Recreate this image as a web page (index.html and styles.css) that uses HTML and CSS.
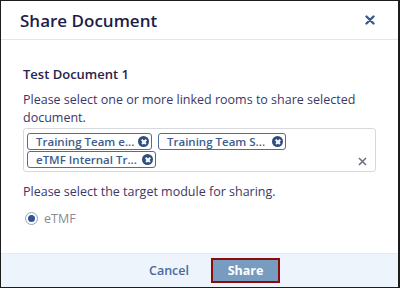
FILE: index.html
```html
<!DOCTYPE html>
<html lang="en">
<head>
    <meta charset="UTF-8">
    <title>Share Document</title>
    <link rel="stylesheet" href="styles.css">
</head>
<body>
    <div class="modal">
        <div class="modal-header">
            <h1>Share Document</h1>
            <button class="close-btn" aria-label="Close">
                <svg width="10" height="10" viewBox="0 0 10 10"><path d="M1.5 1.5 L8.5 8.5 M8.5 1.5 L1.5 8.5" stroke="#3c5a8a" stroke-width="2.4" stroke-linecap="round"/></svg>
            </button>
        </div>

        <div class="modal-body">
            <h2>Test Document 1</h2>
            <p class="hint">Please select one or more linked rooms to share selected document.</p>

            <div class="tag-box">
                <div class="tags">
                    <span class="tag">Training Team e... <i class="tag-x"></i></span>
                    <span class="tag">Training Team S... <i class="tag-x"></i></span>
                    <span class="tag">eTMF Internal Tr... <i class="tag-x"></i></span>
                </div>
                <span class="clear-all">
                    <svg width="9" height="9" viewBox="0 0 9 9"><path d="M1 1 L8 8 M8 1 L1 8" stroke="#6f6f80" stroke-width="1.6"/></svg>
                </span>
            </div>

            <p class="hint">Please select the target module for sharing.</p>

            <label class="radio">
                <span class="radio-dot"></span>
                eTMF
            </label>
        </div>

        <div class="modal-footer">
            <button class="cancel-btn">Cancel</button>
            <button class="share-btn">Share</button>
        </div>
    </div>
</body>
</html>
```

FILE: styles.css
```css
* {
    margin: 0;
    padding: 0;
    box-sizing: border-box;
}

body {
    font-family: "Open Sans", "Liberation Sans", sans-serif;
    background: #fff;
}

.modal {
    width: 400px;
    height: 288px;
    border: 1px solid #1c1c1c;
    border-right-width: 2px;
    display: flex;
    flex-direction: column;
    background: #fff;
}

/* Header */
.modal-header {
    height: 39px;
    padding: 0 19px;
    display: flex;
    align-items: center;
    justify-content: space-between;
    border-bottom: 1px solid #dde6f1;
}

.modal-header h1 {
    font-size: 17px;
    font-weight: 600;
    color: #1e1b4b;
}

.close-btn {
    background: none;
    border: none;
    width: 12px;
    height: 12px;
    display: flex;
    align-items: center;
    justify-content: center;
    margin-right: 3px;
}

/* Body */
.modal-body {
    flex: 1;
    padding: 25px 22px 0;
}

.modal-body h2 {
    font-size: 13px;
    font-weight: 600;
    color: #27224f;
    margin-bottom: 8px;
}

.hint {
    font-size: 12.5px;
    line-height: 18px;
    color: #3c3768;
}

.tag-box {
    margin: 1px 0 11px;
    border: 1px solid #d6d9de;
    border-radius: 3px;
    height: 44px;
    padding: 4px 3px;
    display: flex;
    justify-content: space-between;
}

.tags {
    display: flex;
    flex-wrap: wrap;
    gap: 1px 6px;
    width: 300px;
    align-content: flex-start;
}

.tag {
    display: inline-flex;
    align-items: center;
    justify-content: space-between;
    height: 17px;
    padding: 0 2px 0 8px;
    border: 1px solid #4e6c9c;
    border-radius: 3px;
    font-size: 11.5px;
    font-weight: 600;
    color: #3e5c8c;
    white-space: nowrap;
}

.tag:nth-child(1) { width: 125px; }
.tag:nth-child(2) { width: 128px; }
.tag:nth-child(3) { width: 129px; }

.tag-x {
    width: 11px;
    height: 11px;
    flex-shrink: 0;
    border-radius: 50%;
    background: #2f4f80;
    position: relative;
}

.tag-x::before,
.tag-x::after {
    content: "";
    position: absolute;
    left: 2.5px;
    top: 4.75px;
    width: 6px;
    height: 1.5px;
    background: #fff;
    transform: rotate(45deg);
}

.tag-x::after {
    transform: rotate(-45deg);
}

.clear-all {
    align-self: flex-end;
    margin: 0 5px 1px 0;
    display: flex;
}

.radio {
    display: flex;
    align-items: center;
    gap: 6px;
    margin: 9px 0 0 2px;
    font-size: 12.5px;
    color: #8a8a96;
}

.radio-dot {
    width: 13px;
    height: 13px;
    border-radius: 50%;
    border: 1px solid #8da3c4;
    display: flex;
    align-items: center;
    justify-content: center;
}

.radio-dot::after {
    content: "";
    width: 7px;
    height: 7px;
    border-radius: 50%;
    background: #2f5597;
}

/* Footer */
.modal-footer {
    height: 34px;
    background: #eef4fb;
    border-top: 1px solid #e3ebf5;
    display: flex;
    align-items: center;
    justify-content: center;
    gap: 22px;
    padding-left: 30px;
}

.cancel-btn {
    background: none;
    border: none;
    font-family: inherit;
    font-size: 12.5px;
    font-weight: 600;
    color: #4b6a99;
}

.share-btn {
    width: 69px;
    height: 25px;
    background: #789cc0;
    border: 2px solid #8b0a0a;
    font-family: inherit;
    font-size: 12.5px;
    font-weight: 700;
    color: #fff;
}
```
